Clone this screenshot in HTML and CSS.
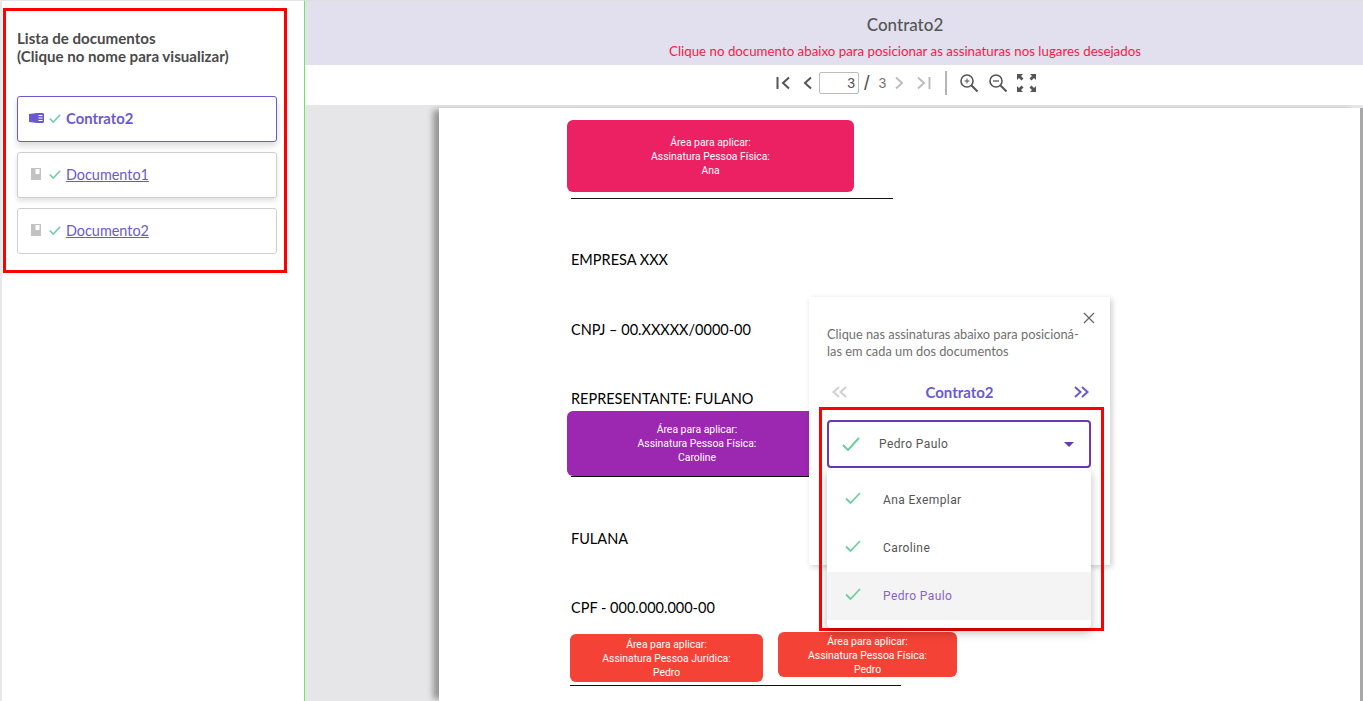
FILE: index.html
```html
<!DOCTYPE html>
<html lang="pt-BR">
<head>
    <meta charset="UTF-8">
    <meta name="viewport" content="width=device-width, initial-scale=1.0">
    <title>Contrato2</title>
    <link rel="stylesheet" href="styles.css">
</head>
<body>
    <aside class="sidebar">
        <div class="doc-box">
            <h2 class="doc-box-title">Lista de documentos<br>(Clique no nome para visualizar)</h2>

            <div class="doc-card doc-card-active">
                <svg class="book-open" viewBox="0 0 15 10" width="15" height="10"><path fill="#6a5acd" d="M0 1l8 -1v10l-8 -1z M8 0h6l1 1v8l-1 1h-6z"/><path stroke="#fff" stroke-width="1" d="M9.500 2.500h4M9.500 5h4M9.500 7.500h4"/></svg>
                <svg class="check-small" viewBox="0 0 12 9" width="12" height="9"><path fill="none" stroke="#74cba0" stroke-width="1.600" d="M.7 4.500l3.500 3.500l7 -7.300"/></svg>
                <span class="doc-name">Contrato2</span>
            </div>
            <div class="doc-card">
                <svg class="book-closed" viewBox="0 0 10 12" width="10" height="12"><path fill="#c2c2c2" d="M0 0h10v12h-10z"/><path fill="#fff" d="M4.500 1h4v5h-4z"/></svg>
                <svg class="check-small" viewBox="0 0 12 9" width="12" height="9"><path fill="none" stroke="#74cba0" stroke-width="1.600" d="M.7 4.500l3.500 3.500l7 -7.300"/></svg>
                <a class="doc-link" href="#">Documento1</a>
            </div>
            <div class="doc-card doc-card-flat">
                <svg class="book-closed" viewBox="0 0 10 12" width="10" height="12"><path fill="#c2c2c2" d="M0 0h10v12h-10z"/><path fill="#fff" d="M4.500 1h4v5h-4z"/></svg>
                <svg class="check-small" viewBox="0 0 12 9" width="12" height="9"><path fill="none" stroke="#74cba0" stroke-width="1.600" d="M.7 4.500l3.500 3.500l7 -7.300"/></svg>
                <a class="doc-link" href="#">Documento2</a>
            </div>
        </div>
    </aside>

    <main class="viewer">
        <header class="viewer-head">
            <h1 class="viewer-title">Contrato2</h1>
            <p class="viewer-hint">Clique no documento abaixo para posicionar as assinaturas nos lugares desejados</p>
        </header>

        <div class="toolbar">
            <svg class="tool tool-first" viewBox="0 0 15 14" width="15" height="14"><path fill="none" stroke="#555" stroke-width="2" d="M1.500 1v12M13 1.500l-6 5.500l6 5.500"/></svg>
            <svg class="tool tool-prev" viewBox="0 0 9 14" width="9" height="14"><path fill="none" stroke="#555" stroke-width="2" d="M8 1.500l-6 5.500l6 5.500"/></svg>
            <input class="page-input" type="text" value="3">
            <span class="page-slash">/</span>
            <span class="page-total">3</span>
            <svg class="tool tool-next" viewBox="0 0 9 14" width="9" height="14"><path fill="none" stroke="#bdbdbd" stroke-width="2" d="M1 1.500l6 5.500l-6 5.500"/></svg>
            <svg class="tool tool-last" viewBox="0 0 15 14" width="15" height="14"><path fill="none" stroke="#bdbdbd" stroke-width="2" d="M13.500 1v12M2 1.500l6 5.500l-6 5.500"/></svg>
            <span class="tool-divider"></span>
            <svg class="tool tool-zoom-in" viewBox="0 0 18 18" width="18" height="18"><circle cx="7" cy="7" r="6" fill="none" stroke="#555" stroke-width="1.600"/><path fill="none" stroke="#555" stroke-width="2" d="M11.500 11.500l6 6"/><path fill="none" stroke="#555" d="M4.500 7h5M7 4.500v5"/></svg>
            <svg class="tool tool-zoom-out" viewBox="0 0 18 18" width="18" height="18"><circle cx="7" cy="7" r="6" fill="none" stroke="#555" stroke-width="1.600"/><path fill="none" stroke="#555" stroke-width="2" d="M11.500 11.500l6 6"/><path fill="none" stroke="#555" stroke-width="1.300" d="M4 7h6"/></svg>
            <svg class="tool tool-full" viewBox="0 0 19 18" width="19" height="18"><path fill="#555" d="M0 0h6l-2 2l2.500 2.500l-2 2l-2.500 -2.500l-2 2z M19 0h-6l2 2l-2.500 2.500l2 2l2.500 -2.500l2 2z M0 18h6l-2 -2l2.500 -2.500l-2 -2l-2.500 2.500l-2 -2z M19 18h-6l2 -2l-2.500 -2.500l2 -2l2.500 2.500l2 -2z"/></svg>
        </div>

        <div class="stage">
            <div class="page">
                <div class="doc-rule"></div>
                <p class="doc-line doc-line-empresa">EMPRESA XXX</p>
                <p class="doc-line">CNPJ – 00.XXXXX/0000-00</p>
                <p class="doc-line doc-line-rep">REPRESENTANTE: FULANO</p>
                <div class="doc-rule doc-rule-second"></div>
                <p class="doc-line doc-line-fulana">FULANA</p>
                <p class="doc-line doc-line-cpf">CPF - 000.000.000-00</p>
                <div class="doc-rule doc-rule-third"></div>

                <div class="sign sign-ana">Área para aplicar:<br>Assinatura Pessoa Física:<br>Ana</div>
                <div class="sign sign-caroline">Área para aplicar:<br>Assinatura Pessoa Física:<br>Caroline</div>
                <div class="sign sign-pedro-pj">Área para aplicar:<br>Assinatura Pessoa Jurídica:<br>Pedro</div>
                <div class="sign sign-pedro-pf">Área para aplicar:<br>Assinatura Pessoa Física:<br>Pedro</div>
            </div>
        </div>

        <section class="popover">
            <svg class="popover-close" viewBox="0 0 12 12" width="12" height="12"><path fill="none" stroke="#666" stroke-width="1.300" d="M1 1l10 10M11 1l-10 10"/></svg>
            <p class="popover-text">Clique nas assinaturas abaixo para posicioná-<br>las em cada um dos documentos</p>
            <div class="popover-nav">
                <svg viewBox="0 0 15 12" width="15" height="12"><path fill="none" stroke="#d0d0d0" stroke-width="2" d="M7 1l-5.500 5l5.500 5M14 1l-5.500 5l5.500 5"/></svg>
                <span class="popover-doc">Contrato2</span>
                <svg viewBox="0 0 15 12" width="15" height="12"><path fill="none" stroke="#6a5acd" stroke-width="2" d="M1 1l5.500 5l-5.500 5M8 1l5.500 5l-5.500 5"/></svg>
            </div>

            <div class="signer-box">
                <div class="signer-select">
                    <svg viewBox="0 0 18 14" width="18" height="14"><path fill="none" stroke="#6ccf9c" stroke-width="2" d="M1 8l5 5l11 -12"/></svg>
                    <span class="signer-select-name">Pedro Paulo</span>
                    <span class="signer-caret"></span>
                </div>
                <ul class="signer-list">
                    <li class="signer-item">
                        <svg viewBox="0 0 16 12" width="16" height="12"><path fill="none" stroke="#6ccf9c" stroke-width="1.800" d="M1 6.500l4.500 4.500l9.500 -10"/></svg>
                        Ana Exemplar
                    </li>
                    <li class="signer-item">
                        <svg viewBox="0 0 16 12" width="16" height="12"><path fill="none" stroke="#6ccf9c" stroke-width="1.800" d="M1 6.500l4.500 4.500l9.500 -10"/></svg>
                        Caroline
                    </li>
                    <li class="signer-item signer-item-on">
                        <svg viewBox="0 0 16 12" width="16" height="12"><path fill="none" stroke="#6ccf9c" stroke-width="1.800" d="M1 6.500l4.500 4.500l9.500 -10"/></svg>
                        Pedro Paulo
                    </li>
                </ul>
            </div>
        </section>
    </main>
</body>
</html>
```

FILE: styles.css
```css
* {
    box-sizing: border-box;
}

html, body {
    height: 100%;
}

body {
    display: flex;
    margin: 0;
    overflow: hidden;
    background-color: #ffffff;
    font-family: Lato, sans-serif;
    color: #444444;
}

/* lista de documentos */
.sidebar {
    flex: 0 0 305px;
    padding: 7px 0 0 1px;
    border-top: 1px solid #e4e4e4;
    border-right: 1px solid #6ee85a;
    border-left: 2px solid #e8e8e8;
}

.doc-box {
    width: 284px;
    height: 265px;
    padding: 18px 10px 0 11px;
    border: 3px solid #ff0000;
}

.doc-box-title {
    margin: 0 0 31px;
    font-size: 15.1px;
    font-weight: 700;
    line-height: 18px;
    color: #4a4a4a;
}

.doc-card {
    display: flex;
    align-items: center;
    width: 260px;
    height: 46px;
    padding: 0 0 2px 11px;
    margin-bottom: 10px;
    background-color: #ffffff;
    border: 1px solid #cfcfcf;
    border-radius: 3px;
    box-shadow: 0 3px 5px rgba(0, 0, 0, 0.12);
}

.doc-card-active {
    border-color: #6a5acd;
    box-shadow: 0 4px 6px rgba(0, 0, 0, 0.14);
}

.doc-card-flat {
    box-shadow: none;
}

.book-open {
    margin-right: 5px;
}

.book-closed {
    margin: 0 8px 0 2px;
}

.check-small {
    margin-right: 5px;
}

.doc-name {
    font-size: 14.8px;
    font-weight: 700;
    color: #6a5acd;
}

.doc-link {
    font-size: 14.4px;
    color: #6a5acd;
}

/* visualizador */
.viewer {
    position: relative;
    display: flex;
    flex: 1;
    flex-direction: column;
    min-width: 0;
}

.viewer-head {
    height: 65px;
    padding: 15px 0 0 142px;
    background-color: #e2e0ee;
    border-top: 1px solid #e0e0e0;
    text-align: center;
}

.viewer-title {
    margin: 0;
    font-size: 17px;
    font-weight: 500;
    line-height: 18px;
    color: #555555;
}

.viewer-hint {
    margin: 10px 0 0;
    font-size: 13.3px;
    line-height: 15px;
    color: #ff1744;
}

.toolbar {
    display: flex;
    align-items: center;
    height: 40px;
    padding: 0 0 4px 471px;
}

.tool-prev {
    margin-left: 12px;
}

.page-input {
    width: 40px;
    height: 22px;
    padding: 0 3px 0 0;
    margin-left: 7px;
    border: 1px solid #bdbdbd;
    border-radius: 2px;
    font-family: "Liberation Sans", sans-serif;
    font-size: 14px;
    text-align: right;
    color: #555555;
}

.page-slash {
    margin-left: 5px;
    font-family: "Liberation Sans", sans-serif;
    font-size: 20px;
    color: #555555;
}

.page-total {
    margin-left: 9px;
    font-family: "Liberation Sans", sans-serif;
    font-size: 14px;
    color: #777777;
}

.tool-next {
    margin-left: 9px;
}

.tool-last {
    margin-left: 12px;
}

.tool-divider {
    width: 2px;
    height: 24px;
    margin-left: 14px;
    background-color: #b5b5b5;
}

.tool-zoom-in {
    margin-left: 13px;
}

.tool-zoom-out {
    margin-left: 11px;
}

.tool-full {
    margin-left: 10px;
}

.stage {
    flex: 1;
    min-height: 0;
    padding: 3px 0 0 134px;
    background-color: #e6e6e8;
}

.page {
    position: relative;
    width: 921px;
    height: 100%;
    padding: 90px 0 0 132px;
    background-color: #ffffff;
    box-shadow: -8px 0 6px -2px rgba(0, 0, 0, 0.35), 3px 0 0 #a8a8a8;
    color: #000000;
}

.doc-rule {
    width: 322px;
    height: 1px;
    background-color: #111111;
}

.doc-rule-second {
    margin-top: 67px;
}

.doc-rule-third {
    width: 331px;
    margin-top: 67px;
    margin-left: -1px;
}

.doc-line {
    margin: 50px 0 0;
    font-size: 14.5px;
    line-height: 20px;
}

.doc-line-empresa {
    margin-top: 51px;
}

.doc-line-rep, .doc-line-cpf {
    margin-top: 49px;
}

.doc-line-fulana {
    margin-top: 52px;
}

/* assinaturas colocadas sobre o documento */
.sign {
    position: absolute;
    border-radius: 6px;
    font-family: Roboto, sans-serif;
    font-size: 10.4px;
    line-height: 14px;
    text-align: center;
    color: #ffffff;
}

.sign-ana {
    left: 128px;
    top: 12px;
    width: 287px;
    height: 72px;
    padding-top: 16px;
    background-color: #ec2164;
}

.sign-caroline {
    left: 128px;
    top: 303px;
    width: 260px;
    height: 65px;
    padding-top: 12px;
    background-color: #9c27b0;
}

.sign-pedro-pj {
    left: 131px;
    top: 526px;
    width: 193px;
    height: 48px;
    padding-top: 4px;
    background-color: #f44336;
}

.sign-pedro-pf {
    left: 339px;
    top: 524px;
    width: 179px;
    height: 45px;
    padding-top: 3px;
    background-color: #f44336;
}

/* painel de assinaturas */
.popover {
    position: absolute;
    left: 504px;
    top: 297px;
    width: 301px;
    height: 268px;
    padding: 29px 18px 0;
    background-color: #ffffff;
    box-shadow: 2px 2px 6px rgba(0, 0, 0, 0.2);
}

.popover-close {
    position: absolute;
    top: 15px;
    right: 15px;
}

.popover-text {
    margin: 0;
    font-size: 12.8px;
    line-height: 17px;
    color: #707070;
}

.popover-nav {
    display: flex;
    align-items: center;
    justify-content: space-between;
    margin-top: 23px;
    padding: 0 3px 0 5px;
}

.popover-doc {
    margin-left: -2px;
    font-size: 15px;
    font-weight: 700;
    color: #6a5acd;
}

.signer-box {
    position: absolute;
    left: 10px;
    top: 110px;
    width: 285px;
    height: 224px;
    padding: 10px 10px 0 5px;
    border: 3px solid #ff0000;
}

.signer-select {
    display: flex;
    align-items: center;
    height: 48px;
    padding: 0 15px 0 13px;
    border: 2px solid #673ab7;
    border-radius: 4px;
}

.signer-select-name {
    flex: 1;
    margin-left: 19px;
    font-family: Roboto, sans-serif;
    font-size: 12px;
    letter-spacing: 0.4px;
    color: #555555;
}

.signer-caret {
    width: 0;
    height: 0;
    border-top: 5px solid #673ab7;
    border-right: 5px solid transparent;
    border-left: 5px solid transparent;
}

.signer-list {
    position: relative;
    margin: 0;
    padding: 8px 0;
    list-style: none;
    background-color: #ffffff;
    border-radius: 0 0 4px 4px;
    box-shadow: 0 5px 10px rgba(0, 0, 0, 0.25);
}

.signer-item {
    display: flex;
    align-items: center;
    height: 48px;
    padding-left: 18px;
    font-family: Roboto, sans-serif;
    font-size: 12px;
    letter-spacing: 0.4px;
    color: #555555;
}

.signer-item svg {
    margin: -4px 22px 0 0;
}

.signer-item-on {
    background-color: #f4f4f4;
    color: #8a5fd0;
}
```
